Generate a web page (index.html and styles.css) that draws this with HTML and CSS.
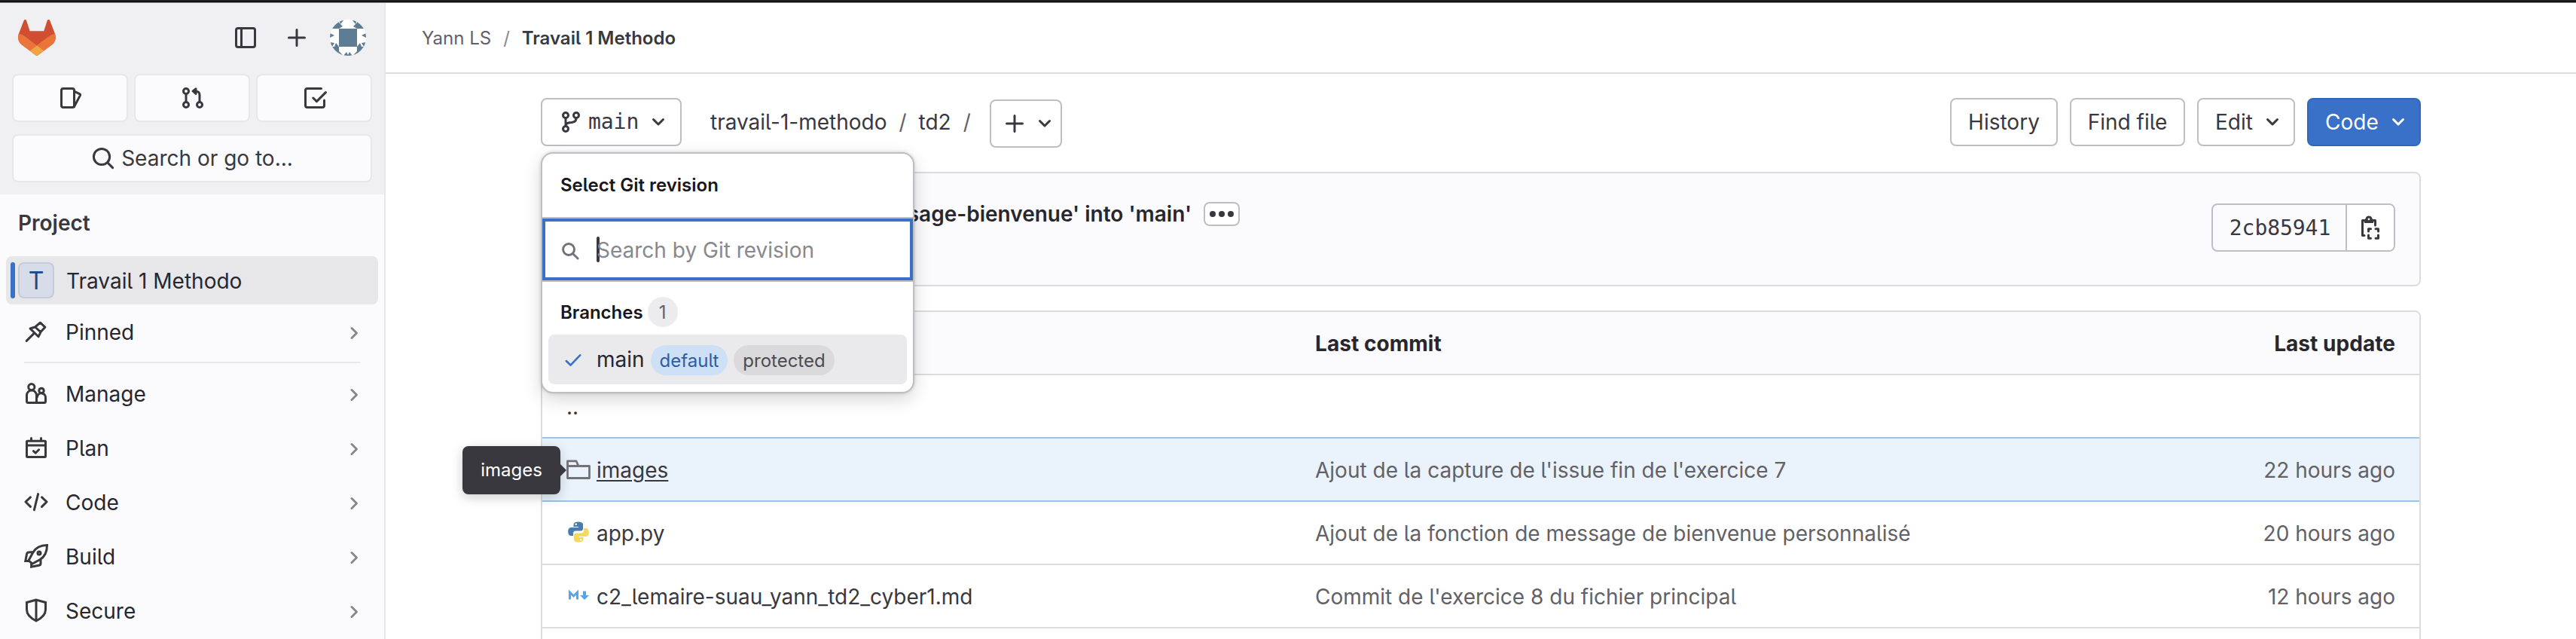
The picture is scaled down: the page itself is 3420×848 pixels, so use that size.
FILE: index.html
```html
<!DOCTYPE html>
<html lang="fr">
<head>
<meta charset="utf-8">
<title>Travail 1 Methodo</title>
<link rel="stylesheet" href="styles.css">
</head>
<body>
<svg class="defs" aria-hidden="true">
  <symbol id="down" viewBox="0 0 16 16"><path d="M4.75 6.25 8 9.5l3.25-3.25"/></symbol>
  <symbol id="right" viewBox="0 0 16 16"><path d="M6.5 4.75 9.75 8 6.5 11.25"/></symbol>
  <symbol id="plus" viewBox="0 0 16 16"><path d="M8 2.75v10.5M2.75 8h10.5"/></symbol>
</svg>
<div class="window-edge"></div>
<div class="app">
  <aside class="sidebar">
    <div class="side-head">
      <div class="brand-row">
        <svg class="logo" viewBox="0 0 25 24"><path fill="#d24e33" d="m24.507 9.5-.034-.09L21.082.562a.896.896 0 0 0-1.694.091l-2.29 7.01H7.825L5.535.653a.898.898 0 0 0-1.694-.09L.451 9.411.416 9.5a6.297 6.297 0 0 0 2.09 7.278l.012.01.03.022 5.16 3.867 2.56 1.935 1.554 1.176a1.051 1.051 0 0 0 1.268 0l1.555-1.176 2.56-1.935 5.197-3.89.014-.01A6.297 6.297 0 0 0 24.507 9.5Z"/><path fill="#e9753b" d="m24.507 9.5-.034-.09a11.44 11.44 0 0 0-4.56 2.051l-7.447 5.632 4.742 3.584 5.197-3.89.014-.01A6.297 6.297 0 0 0 24.507 9.5Z"/><path fill="#efa544" d="m7.707 20.677 2.56 1.935 1.555 1.176a1.051 1.051 0 0 0 1.268 0l1.555-1.176 2.56-1.935-4.743-3.584-4.755 3.584Z"/><path fill="#e9753b" d="M5.01 11.461a11.43 11.43 0 0 0-4.56-2.05L.416 9.5a6.297 6.297 0 0 0 2.09 7.278l.012.01.03.022 5.16 3.867 4.745-3.584-7.444-5.632Z"/></svg>
        <svg class="icon toggle" viewBox="0 0 16 16"><rect x="1.75" y="1.75" width="12.5" height="12.5" rx="1.25"/><path d="M5.25 2v12"/></svg>
        <svg class="icon new"><use href="#plus"/></svg>
        <svg class="user" viewBox="0 0 48 48"><defs><clipPath id="round"><circle cx="24" cy="24" r="24"/></clipPath></defs><g clip-path="url(#round)"><path fill="#fff" d="M0 0h48v48H0z"/><g fill="#5c7d93"><path d="M12 12h24v24H12z"/><g id="half"><path d="M12 0 18 1 14 6ZM0 12 12 0V4L7 10ZM12 4 17 9 12 12H2L4 8Z"/><path d="M0 18 6 21 0 24ZM0 30 6 31 3 36H6L8 31 12 36V42L17 47V48H0Z"/></g><use href="#half" transform="matrix(-1 0 0 1 48 0)"/><path d="M18 48 22 43 24 47 26 43 30 48Z"/></g></g></svg>
      </div>
      <div class="shortcuts">
        <a class="tile"><svg class="icon" viewBox="0 0 16 16"><rect x="1.75" y="1.75" width="8.5" height="12.5" rx="1.25"/><path d="m10.5 3.7 3.300 1.600q.7.300.4 1L10.200 13.900"/></svg></a>
        <a class="tile"><svg class="icon" viewBox="0 0 16 16"><circle cx="3.5" cy="3.5" r="1.75"/><circle cx="3.5" cy="12.5" r="1.75"/><circle cx="12.5" cy="12.5" r="1.75"/><path d="M3.5 5.25v5.5M12.5 10.75V6q0-2.250-2.500-2.500H8.500M10 1.900 8.100 3.500 10 5.200Z"/></svg></a>
        <a class="tile"><svg class="icon" viewBox="0 0 16 16"><path d="M12.250 1.750H3q-1.250 0-1.250 1.250v10q0 1.250 1.250 1.250h10q1.250 0 1.250-1.250V9.500M6.900 8l2.300 2.300 6-6"/></svg></a>
      </div>
      <div class="search"><svg class="icon" viewBox="0 0 16 16"><circle cx="7" cy="7" r="5.3"/><path d="m11 11 3.300 3.300"/></svg><span>Search or go to...</span></div>
    </div>
    <nav class="nav">
      <h2 class="nav-title">Project</h2>
      <a class="nav-item active"><i class="bar"></i><b class="letter">T</b><span>Travail 1 Methodo</span></a>
      <a class="nav-item pinned"><svg class="icon" viewBox="0 0 16 16"><path d="M10.700 2.100 13.900 5.100 11 8.300 9.500 11.400 4 6 7.300 5ZM7.300 5 11 8.300M1.600 14.200 6.500 9.300"/></svg><span>Pinned</span><svg class="icon chev"><use href="#right"/></svg></a>
      <hr class="rule">
      <a class="nav-item"><svg class="icon" viewBox="0 0 16 16"><circle cx="4.900" cy="3.800" r="2.050"/><path d="M1.750 13.250V9.300a3.250 3.250 0 0 1 6.500 0v4.950h-5.500q-1 0-1-1Z"/><circle cx="11.500" cy="6.200" r="1.600"/><path d="M8.250 14.250h5q1 0 1-1V11a2.750 2.750 0 0 0-5.500-.6"/></svg><span>Manage</span><svg class="icon chev"><use href="#right"/></svg></a>
      <a class="nav-item"><svg class="icon" viewBox="0 0 16 16"><rect x="1.750" y="3.600" width="12.500" height="10.650" rx=".5"/><path d="M2 6.500h12M4.750 1.750v1.500M11.250 1.750v1.500M6.200 10.300l1.400 1.300 2.200-2.200"/></svg><span>Plan</span><svg class="icon chev"><use href="#right"/></svg></a>
      <a class="nav-item"><svg class="icon" viewBox="0 0 16 16"><path d="M4.200 4.900 1 8l3.200 3.200M11.800 4.900 15 8l-3.200 3.200M9.300 2.800 6.700 13.300"/></svg><span>Code</span><svg class="icon chev"><use href="#right"/></svg></a>
      <a class="nav-item"><svg class="icon sharp" viewBox="0 0 16 16"><path d="M15.250.75C10.500.75 7.600 2.500 5.800 5.700L3 10.900l2.400 2.200 5-2.700c3.500-2 4.850-4.900 4.850-9.650ZM5.900 5.200 3 5.500q-1 .1-1.200 1L.9 11.200H3.200M11 10v2.700q0 1.200-1.100 1.400L4.800 15.100V12.800"/><circle cx="10" cy="6" r="1"/></svg><span>Build</span><svg class="icon chev"><use href="#right"/></svg></a>
      <a class="nav-item"><svg class="icon sharp" viewBox="0 0 16 16"><path d="M8 1 1.750 2.750V7.500C1.750 11 4.250 13.100 8 15c3.750-1.900 6.250-4 6.250-7.500V2.750ZM8 1v14"/></svg><span>Secure</span><svg class="icon chev"><use href="#right"/></svg></a>
    </nav>
  </aside>
  <main class="main">
    <header class="crumbs"><span>Yann LS</span><i>/</i><b>Travail 1 Methodo</b></header>
    <div class="content">
      <div class="toolbar">
        <div class="ref">
          <button class="btn ref-btn"><svg class="icon" viewBox="0 0 16 16"><circle cx="3.500" cy="3.500" r="1.750"/><circle cx="10.500" cy="3.500" r="1.750"/><circle cx="3.500" cy="12.500" r="1.750"/><path d="M3.500 5.250v5.500M10.500 5.250Q10.500 8 7.500 8.200 4 8.200 3.500 10"/></svg><span class="mono">main</span><svg class="icon"><use href="#down"/></svg></button>
          <section class="dropdown">
            <h3 class="dd-title">Select Git revision</h3>
            <div class="dd-search"><svg class="icon small" viewBox="0 0 16 16"><circle cx="6.800" cy="6.800" r="4.600"/><path d="m10.400 10.400 3.800 3.800"/></svg><i class="caret"></i><span>Search by Git revision</span></div>
            <div class="dd-group"><b>Branches</b><span class="count">1</span></div>
            <div class="dd-item"><svg class="icon check" viewBox="0 0 16 16"><path d="M2.750 8.600 6 11.750 13.250 4.250"/></svg><span class="dd-name">main</span><span class="badge info">default</span><span class="badge">protected</span></div>
          </section>
        </div>
        <div class="path"><span>travail-1-methodo</span><i>/</i><span>td2</span><i>/</i></div>
        <button class="btn add"><svg class="icon"><use href="#plus"/></svg><svg class="icon"><use href="#down"/></svg></button>
        <div class="actions">
          <button class="btn history">History</button><button class="btn find">Find file</button><button class="btn drop edit">Edit<svg class="icon"><use href="#down"/></svg></button><button class="btn drop primary">Code<svg class="icon"><use href="#down"/></svg></button>
        </div>
      </div>
      <section class="commit">
        <div class="message"><b>message-bienvenue' into 'main'</b><button class="more"><i></i><i></i><i></i></button></div>
        <div class="sha"><span class="mono">2cb85941</span><button class="copy"><svg class="icon" viewBox="0 0 16 16"><path d="M4 13.250H2.750v-10H4M10 3.250h1.250V6.500"/><path class="solid" d="M4 5V3q0-.7.700-.8.400-1.900 2.300-1.900t2.300 1.900q.7.100.7.800v2ZM7 1.700a.7.700 0 1 0 0 1.400.7.700 0 0 0 0-1.400Z" fill-rule="evenodd"/><path d="M6.750 10.500V8.900h1.500M11.500 8.900h1.750v1.600M13.250 13v2.100H11.500M8.250 15.100h-1.500V13"/></svg></button></div>
      </section>
      <section class="files">
        <div class="row head"><b></b><b>Last commit</b><b class="time">Last update</b></div>
        <div class="row"><span class="name up">..</span></div>
        <div class="row hover">
          <div class="name"><svg class="icon folder" viewBox="0 0 16 16"><path d="M.75 3v10.250h14.500V5.250H8L6.500 1.900H.75ZM.75 5.250H8"/></svg><a>images</a><span class="tooltip">images</span></div>
          <span>Ajout de la capture de l'issue fin de l'exercice 7</span><span class="time">22 hours ago</span>
        </div>
        <div class="row">
          <div class="name"><svg class="file-icon" viewBox="0 0 32 32"><path fill="#4a7bab" d="M15.800 2.500q6.200 0 6.200 3.600v5.400q0 3-3 3h-6.500q-3.500 0-3.500 3.500V21H6.500Q2.200 21 2.200 15.500 2.200 10 6.500 10H16V9H9.500V6q0-3.500 6.300-3.500Z"/><circle cx="12.700" cy="5.800" r="1.300" fill="#fff"/><path fill="#f5d85c" d="M16.200 29.500q-6.200 0-6.200-3.600v-5.400q0-3 3-3h6.500q3.500 0 3.500-3.500V11h2.500q4.300 0 4.300 5.500 0 5.500-4.300 5.500H16v1h6.500v3q0 3.500-6.300 3.500Z"/><circle cx="19.300" cy="26.200" r="1.300" fill="#fff"/></svg><a>app.py</a></div>
          <span>Ajout de la fonction de message de bienvenue personnalisé</span><span class="time">20 hours ago</span>
        </div>
        <div class="row">
          <div class="name"><svg class="file-icon" viewBox="0 0 32 32"><path fill="none" stroke="#58a3ee" stroke-width="3" d="M4.500 21.500V12L9.500 17 14.500 12v9.500"/><path fill="#58a3ee" d="M22 10.500h4V16h4L24 22l-6-6h4Z"/></svg><a>c2_lemaire-suau_yann_td2_cyber1.md</a></div>
          <span>Commit de l'exercice 8 du fichier principal</span><span class="time">12 hours ago</span>
        </div>
        <div class="row"></div>
      </section>
    </div>
  </main>
</div>
</body>
</html>
```
FILE: styles.css
```css
* { box-sizing: border-box; }
body {
  margin: 0;
  height: 848px;
  overflow: hidden;
  background: #fff;
  color: #3a383f;
  font: 28px/40px Inter, "Liberation Sans", sans-serif;
  font-feature-settings: "cv05";
}
h2, h3 { margin: 0; font-weight: 600; }
i { font-style: normal; }
b { font-weight: 600; }
button { font: inherit; color: inherit; margin: 0; padding: 0; }
.defs { display: none; }
.icon {
  width: 32px;
  height: 32px;
  flex: none;
  fill: none;
  stroke: currentColor;
  stroke-width: 1.5;
  stroke-linecap: round;
  stroke-linejoin: round;
}
.sharp { stroke-linecap: butt; stroke-linejoin: miter; }
.solid { fill: currentColor; stroke: none; }
.mono { font-family: "DejaVu Sans Mono", monospace; letter-spacing: -.05px; }

.window-edge {
  height: 4px;
  background: linear-gradient(#1f1f1f 2px, #000 2px);
  border-bottom: 1px solid #8c8c8c;
}
.app { display: flex; height: 844px; overflow: hidden; }

.sidebar { width: 512px; flex: none; background: #fbfafd; border-right: 2px solid #e7e7e9; }
.side-head { height: 254px; padding: 22px 16px 0; background: #f0f0f2; }
.brand-row { display: flex; align-items: center; height: 48px; padding: 0 8px; }
.logo { width: 50px; height: 48px; }
.toggle { margin-left: auto; }
.new { margin-left: 36px; }
.user { width: 48px; height: 48px; margin-left: 28px; }
.shortcuts { display: flex; gap: 8px; margin-top: 24px; }
.tile, .search {
  display: flex;
  align-items: center;
  justify-content: center;
  height: 64px;
  border: 2px solid #e7e7e9;
  border-radius: 8px;
  background: #fbfafd;
}
.tile { flex: 1; padding-left: 2px; }
.search { margin-top: 16px; gap: 8px; }
.nav-title { height: 82px; padding: 18px 24px 0; font-size: 28px; line-height: 40px; }
.nav-item {
  display: flex;
  align-items: center;
  height: 64px;
  margin: 0 8px 8px;
  padding: 0 20px 0 24px;
  color: #28272d;
  border-radius: 8px;
}
.nav-item > .icon { color: #3a383f; }
.nav-item > span { margin-left: 23px; padding-top: 2px; }
.nav-item > .chev { margin: 4px -4px 0 auto; color: #89888d; }
.active { background: #e7e7e9; padding-left: 6px; margin: 0 8px 4px; }
.bar { width: 6px; height: 48px; border-radius: 4px; background: #3871c7; }
.letter {
  width: 48px;
  height: 48px;
  margin-left: 4px;
  border: 2px solid #c5cbd9;
  border-radius: 8px;
  background: #d6dde9;
  color: #1d4a8c;
  font-size: 32px;
  font-weight: 400;
  line-height: 46px;
  text-align: center;
}
.nav-item.active > span { margin-left: 16px; }
.rule { height: 2px; margin: 0 32px 8px; border: 0; background: #e7e7ef; }

.main { flex: 1; }
.crumbs {
  display: flex;
  align-items: center;
  height: 94px;
  padding: 1px 48px 0;
  border-bottom: 2px solid #dcdcde;
  font-size: 24px;
  color: #626168;
}
.crumbs i { margin: 0 16px; color: #89888d; }
.crumbs b { color: #3a383f; }
.content { width: 2496px; margin: 32px 0 0 206px; }
.toolbar { display: flex; height: 98px; align-items: flex-start; }
.btn {
  display: flex;
  align-items: center;
  justify-content: center;
  height: 64px;
  border: 2px solid #bfbfc3;
  border-radius: 8px;
  background: #fff;
}
.ref { position: relative; }
.ref-btn { width: 187px; padding: 0 13px 0 24px; }
.ref-btn .mono { margin: 0 auto 0 5px; }
.path { display: flex; margin: 12px 0 0 38px; }
.path i { margin: 0 16px; color: #626168; }
.add { width: 96px; margin: 2px 0 0 9px; padding: 0 5px 0 15px; justify-content: space-between; }
.actions { display: flex; gap: 16px; margin-left: auto; }
.history { width: 143px; }
.find { width: 153px; }
.drop { justify-content: space-between; padding: 0 12px 0 22px; }
.edit { width: 130px; }
.primary { width: 151px; background: #3871c7; border-color: #2f68b8; color: #fff; }

.dropdown {
  position: absolute;
  z-index: 2;
  top: 72px;
  left: 0;
  width: 496px;
  height: 320px;
  border: 2px solid #bfbfc3;
  border-radius: 16px;
  background: #fff;
  box-shadow: 0 0 4px rgba(5, 5, 6, .16), 0 8px 24px rgba(5, 5, 6, .16);
  font-size: 24px;
  color: #18171d;
}
.dd-title { height: 84px; padding: 22px 24px 0; font-size: 24px; line-height: 40px; }
.dd-search {
  display: flex;
  align-items: center;
  height: 82px;
  margin: 2px 0;
  padding: 0 20px;
  border: 4px solid #3871c7;
  box-shadow: 0 -2px #bfbfc3, 0 2px #bfbfc3;
  font-size: 28px;
  color: #89888d;
}
.small { width: 26px; height: 26px; margin-top: 3px; color: #737278; stroke-width: 1.8; }
.caret { width: 4px; height: 34px; margin-left: 22px; border-radius: 2px; background: #3a383f; }
.dd-search span { margin-left: -4px; padding-top: 2px; }
.dd-group { display: flex; align-items: center; gap: 6px; height: 40px; margin: 22px 24px 10px; }
.dd-group b { padding-top: 2px; }
.count { width: 40px; height: 40px; padding-top: 1px; border-radius: 20px; background: #ececef; color: #626168; text-align: center; }
.dd-item {
  display: flex;
  align-items: center;
  height: 66px;
  margin: 0 8px;
  padding: 2px 20px 0;
  border-radius: 8px;
  background: #eaeaec;
}
.check { width: 28px; height: 28px; margin: 0 17px 0 -1px; color: #3871c7; }
.dd-name { font-size: 28px; margin-top: -2px; color: #28272d; }
.badge { height: 40px; margin-left: 8px; padding: 1px 12px 0; border-radius: 20px; background: #dadadc; color: #4c4b51; }
.info { background: #cee0f6; color: #2f5ca0; }

.commit {
  display: flex;
  justify-content: space-between;
  height: 152px;
  padding: 0 32px;
  border: 2px solid #dcdcde;
  border-radius: 8px;
  background: #fbfafd;
  color: #28272d;
}
.message { display: flex; width: 894px; height: 40px; margin-top: 34px; align-items: center; justify-content: flex-end; gap: 16px; }
.more {
  display: flex;
  align-items: center;
  justify-content: center;
  gap: 4px;
  width: 48px;
  height: 32px;
  border: 2px solid #bfbfc3;
  border-radius: 8px;
  background: #fff;
}
.more i { width: 8px; height: 8px; border-radius: 50%; background: #3a383f; }
.sha {
  display: flex;
  align-items: center;
  width: 244px;
  height: 64px;
  margin-top: 40px;
  border: 2px solid #bfbfc3;
  border-radius: 8px;
  overflow: hidden;
  color: #3a383f;
}
.sha .mono { flex: 1; padding: 1px 0 0 2px; text-align: center; }
.copy { display: flex; align-items: center; justify-content: center; width: 64px; height: 60px; border: 0; border-left: 2px solid #bfbfc3; background: #fff; }

.files { margin-top: 32px; border: 2px solid #dcdcde; border-radius: 8px; }
.row {
  display: grid;
  grid-template-columns: 994px 1fr 300px;
  align-items: center;
  height: 84px;
  padding: 2px 32px 0;
  border-bottom: 2px solid #dcdcde;
  color: #626168;
}
.head { background: #fbfafd; color: #28272d; border-radius: 6px 6px 0 0; }
.head b { font-weight: 650; letter-spacing: .05px; }
.row:nth-child(2) { border-color: #9dc3ec; }
.hover { background: #eaf3fb; border-color: #9dc3ec; }
.hover a { text-decoration: underline; text-decoration-thickness: 2px; text-underline-offset: 3px; }
.time { text-align: right; }
.name { position: relative; display: flex; align-items: center; gap: 8px; color: #3a383f; }
.folder { margin-top: -1px; color: #737278; stroke-linecap: butt; stroke-width: 1.4; }
.file-icon { width: 32px; height: 32px; margin-top: -32px; margin-bottom: -28px; }
.tooltip {
  position: absolute;
  right: 100%;
  top: -12px;
  margin-right: 8px;
  width: 130px;
  height: 64px;
  border-radius: 8px;
  background: #3a383f;
  color: #fff;
  font-size: 24px;
  line-height: 63px;
  text-align: center;
  box-shadow: 0 4px 16px rgba(5, 5, 6, .2);
}
.tooltip::after {
  content: "";
  position: absolute;
  left: 100%;
  top: 24px;
  border: 8px solid transparent;
  border-left-color: #3a383f;
  border-right: 0;
}
```
